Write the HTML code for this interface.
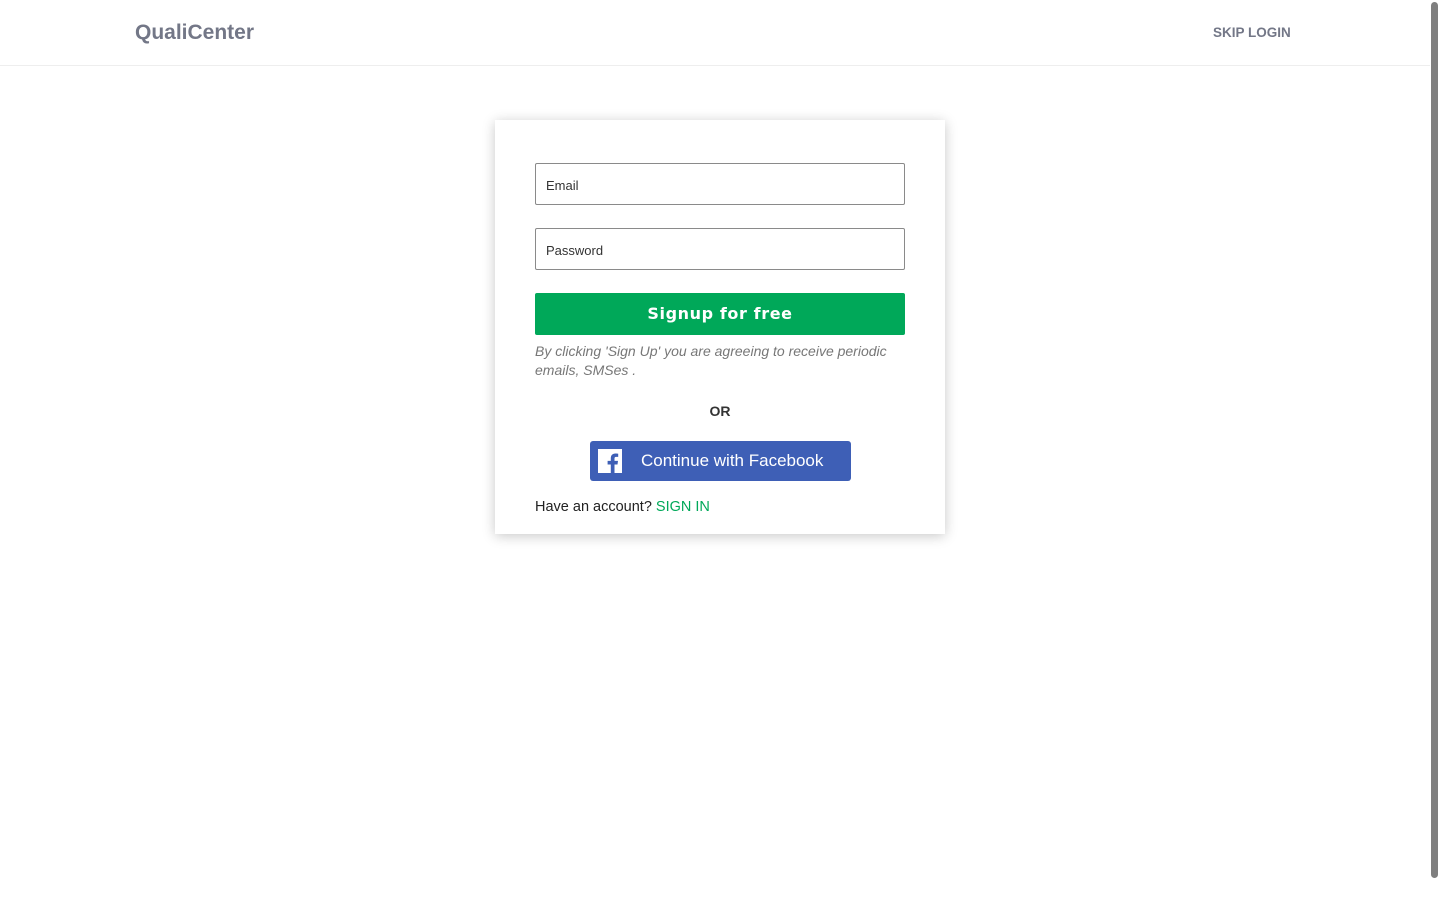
<!DOCTYPE html>
<html><head><meta charset="utf-8"><style>
*{box-sizing:border-box;margin:0;padding:0}
body{width:1440px;height:900px;background:#fff;font-family:"Liberation Sans","DejaVu Sans",sans-serif;position:relative;overflow:hidden}
.hdr{position:absolute;left:0;top:0;width:1430px;height:66px;border-bottom:1px solid #eee}
.logo{position:absolute;left:135px;top:21px;font-size:21px;font-weight:bold;color:#737787}
.skip{position:absolute;left:1213px;top:25px;font-size:13.5px;font-weight:bold;color:#737787}
.card{position:absolute;left:495px;top:120px;width:450px;height:414px;background:#fff;box-shadow:0 2px 12px rgba(0,0,0,.22)}
.inp{position:absolute;left:40px;width:370px;height:42px;border:1px solid #8a8a8a;border-radius:2px;font-size:13px;color:#333;padding:14px 10px}
.btn{position:absolute;left:40px;top:173px;width:370px;height:42px;background:#00a859;border-radius:2px;color:#fff;font-weight:bold;text-align:center;line-height:42px;letter-spacing:0.6px;font-family:"DejaVu Sans",sans-serif;font-size:16px}
.note{position:absolute;left:40px;top:222px;width:375px;font-size:14px;font-style:italic;color:#777;line-height:19px}
.or{position:absolute;left:0;width:450px;top:283px;text-align:center;font-size:14px;font-weight:bold;color:#333}
.fb{position:absolute;left:95px;top:321px;width:261px;height:40px;background:#3e5fb6;border-radius:3px;color:#fff;font-size:17px;line-height:40px;padding-left:51px}
.fbi{position:absolute;left:8px;top:8px;width:24px;height:24px;background:#fff}
.have{position:absolute;left:40px;top:379px;font-size:14.5px;color:#222}
.have span{color:#00a859}
.sb{position:absolute;left:1431px;top:2px;width:7px;height:876px;background:#7f7f7f;border-radius:4px}
</style></head><body>
<div class="hdr"><div class="logo">QualiCenter</div><div class="skip">SKIP LOGIN</div></div>
<div class="card">
<div class="inp" style="top:43px">Email</div>
<div class="inp" style="top:108px">Password</div>
<div class="btn">Signup for free</div>
<div class="note">By clicking 'Sign Up' you are agreeing to receive periodic emails, SMSes .</div>
<div class="or">OR</div>
<div class="fb"><div class="fbi"><svg width="24" height="24" viewBox="0 0 24 24"><path d="M16.5 24V14.5h3l.5-3.6h-3.5V8.7c0-1 .3-1.8 1.8-1.8h1.9V3.7c-.3 0-1.5-.2-2.8-.2-2.8 0-4.6 1.7-4.6 4.8v2.6H9.6v3.6h3.2V24z" fill="#3e5fb6"/></svg></div>Continue with Facebook</div>
<div class="have">Have an account? <span>SIGN IN</span></div>
</div>
<div class="sb"></div>
</body></html>
